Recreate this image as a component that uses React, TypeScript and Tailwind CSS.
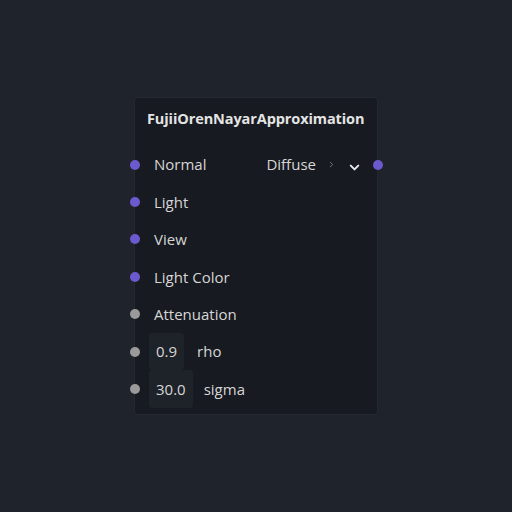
import { ChevronDown, ChevronRight } from "lucide-react";

type Row = {
  label: string;
  socket: "purple" | "grey";
  value?: string;
};

const rows: Row[] = [
  { label: "Light", socket: "purple" },
  { label: "View", socket: "purple" },
  { label: "Light Color", socket: "purple" },
  { label: "Attenuation", socket: "grey" },
  { label: "rho", socket: "grey", value: "0.9" },
  { label: "sigma", socket: "grey", value: "30.0" },
];

function Socket({ color }: { color: "purple" | "grey" }) {
  return (
    <span
      className={
        color === "purple"
          ? "block w-[10px] h-[10px] rounded-full bg-[#6a5acd] shrink-0"
          : "block w-[10px] h-[10px] rounded-full bg-[#9a9a9a] shrink-0"
      }
    />
  );
}

export default function App() {
  return (
    <div
      className="w-[512px] h-[512px] bg-[#1f232b] flex items-center justify-center"
      style={{ fontFamily: '"Open Sans", "Noto Sans", sans-serif' }}
    >
      <div className="w-[244px] h-[318px] bg-[#171a20] border border-[#23272e] rounded-[4px] flex flex-col">
        <div className="h-[48px] flex items-center pl-[12px] pb-[6px] text-[14.5px] font-bold text-[#e4e4e4] tracking-[-0.1px]">
          FujiiOrenNayarApproximation
        </div>

        <div className="h-[37.4px] flex items-center -ml-[5px] -mr-[6px] text-[15px] text-[#d6d6d6]">
          <Socket color="purple" />
          <span className="ml-[14px]">Normal</span>
          <span className="ml-auto">Diffuse</span>
          <ChevronRight className="ml-[11px] w-[9px] h-[9px] text-[#7a7a7a]" strokeWidth={2.5} />
          <ChevronDown className="ml-[11px] mt-[6px] w-[15px] h-[15px] text-[#e8e8e8]" strokeWidth={3.2} />
          <span className="ml-[11px]">
            <Socket color="purple" />
          </span>
        </div>

        {rows.map((r) => (
          <div
            key={r.label}
            className="h-[37.4px] flex items-center -ml-[5px] text-[15px] text-[#d6d6d6]"
          >
            <Socket color={r.socket} />
            {r.value ? (
              <>
                <span className="ml-[9px] h-full flex items-center px-[7px] bg-[#1e2229] rounded-[3px]">
                  {r.value}
                </span>
                <span className={r.label === "rho" ? "ml-[13px]" : "ml-[11px]"}>
                  {r.label}
                </span>
              </>
            ) : (
              <span className="ml-[14px]">{r.label}</span>
            )}
          </div>
        ))}
      </div>
    </div>
  );
}
